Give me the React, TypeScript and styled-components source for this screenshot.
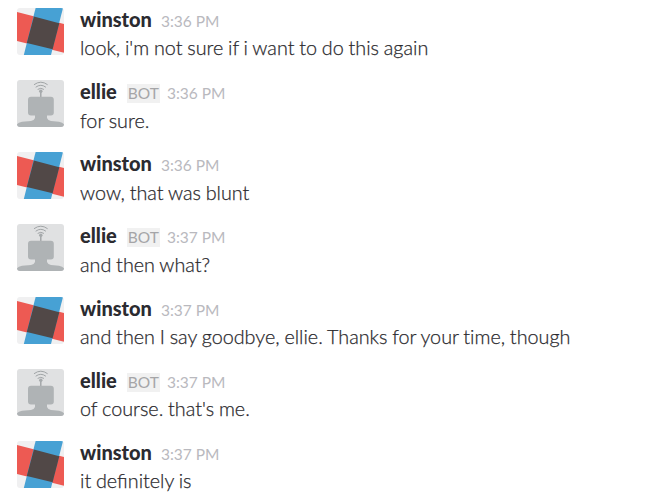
import React from "react";
import styled, { createGlobalStyle } from "styled-components";

const GlobalStyle = createGlobalStyle`
  html, body { margin: 0; background: #fff; overflow: hidden; }
  * { box-sizing: border-box; }
`;

const Chat = styled.main`
  width: 650px;
  height: 500px;
  padding: 8px 0 0 17px;
  overflow: hidden;
  background: #fff;
  font-family: Lato, sans-serif;
`;

const Message = styled.article`
  display: flex;
  gap: 16px;
  height: 72.17px;
`;

const Avatar = styled.svg`
  display: block;
  flex: none;
  width: 47px;
  height: 47px;
  border-radius: 3px;
`;

const Body = styled.div`
  display: flex;
  flex-direction: column;
`;

const Header = styled.header`
  display: flex;
  align-items: baseline;
  height: 23px;
  line-height: 23px;
  white-space: nowrap;
`;

const Name = styled.span`
  color: #2b2b30;
  font-size: 20px;
  font-weight: 900;
`;

const Badge = styled.span`
  margin-left: 10px;
  padding: 0 1px;
  background: #f1f1f1;
  color: #a5a5a7;
  font-size: 15.5px;
  line-height: 19px;
`;

const Time = styled.time<{ $afterBadge: boolean }>`
  margin-left: ${(p) => (p.$afterBadge ? 7 : 9)}px;
  color: #b9b9be;
  font-size: 15.5px;
`;

const Text = styled.p<{ $plain?: boolean }>`
  margin: 3.4px 0 0;
  color: #2b2a2e;
  font-size: 19.8px;
  font-weight: 300;
  line-height: 26px;
  word-spacing: -0.6px;
  white-space: nowrap;
  -webkit-text-stroke: 0.25px #2b2a2e;
  font-variant-ligatures: ${(p) => (p.$plain ? "none" : "normal")};
`;

const WinstonAvatar = () => (
  <Avatar viewBox="0 0 47 47" aria-label="winston">
    <path fill="#f0f0f1" d="M0 0h47v47H0z" />
    <path fill="#ed5a53" d="M0 4 47 16V44.7L0 33z" />
    <path fill="#47a1d4" d="M18.6 0H46L34 47H6.8z" />
    <path fill="#514847" d="M16.9 8.5 42.3 15.2 35.6 41.3 9.8 35z" />
  </Avatar>
);

const BotAvatar = () => (
  <Avatar viewBox="0 0 47 47" aria-label="ellie">
    <path fill="#e0e1e2" d="M0 0h47v47H0z" />
    <g fill="none" stroke="#a0a4a6" strokeWidth="1" strokeLinecap="round">
      <path d="M17.3 4.5q6.5-4.8 13 0M19 7q4.8-3.6 9.6 0M21 9.2q2.8-2 5.6 0" />
      <path d="M23.8 11v7" strokeWidth="1.4" />
    </g>
    <circle cx="23.8" cy="11.2" r="1.7" fill="#a6aaac" />
    <rect x="11" y="16.8" width="25.8" height="18.8" rx="3" fill="#afb3b5" />
    <path fill="#afb3b5" d="M18 35h12v3q1 2.7 4 3l8 .7q3.6.5 5 2.6V47H0v-2.7q1.4-2.1 5-2.6l9-.7q3-.3 4-3z" />
  </Avatar>
);

const messages = [
  { bot: false, time: "3:36 PM", text: "look, i'm not sure if i want to do this again" },
  { bot: true, time: "3:36 PM", text: "for sure." },
  { bot: false, time: "3:36 PM", text: "wow, that was blunt" },
  { bot: true, time: "3:37 PM", text: "and then what?" },
  { bot: false, time: "3:37 PM", text: "and then I say goodbye, ellie. Thanks for your time, though", plain: true },
  { bot: true, time: "3:37 PM", text: "of course. that's me." },
  { bot: false, time: "3:37 PM", text: "it definitely is" },
];

export default function App() {
  return (
    <>
      <GlobalStyle />
      <Chat>
        {messages.map((m, i) => (
          <Message key={i}>
            {m.bot ? <BotAvatar /> : <WinstonAvatar />}
            <Body>
              <Header>
                <Name>{m.bot ? "ellie" : "winston"}</Name>
                {m.bot && <Badge>BOT</Badge>}
                <Time $afterBadge={m.bot}>{m.time}</Time>
              </Header>
              <Text $plain={m.plain}>{m.text}</Text>
            </Body>
          </Message>
        ))}
      </Chat>
    </>
  );
}
